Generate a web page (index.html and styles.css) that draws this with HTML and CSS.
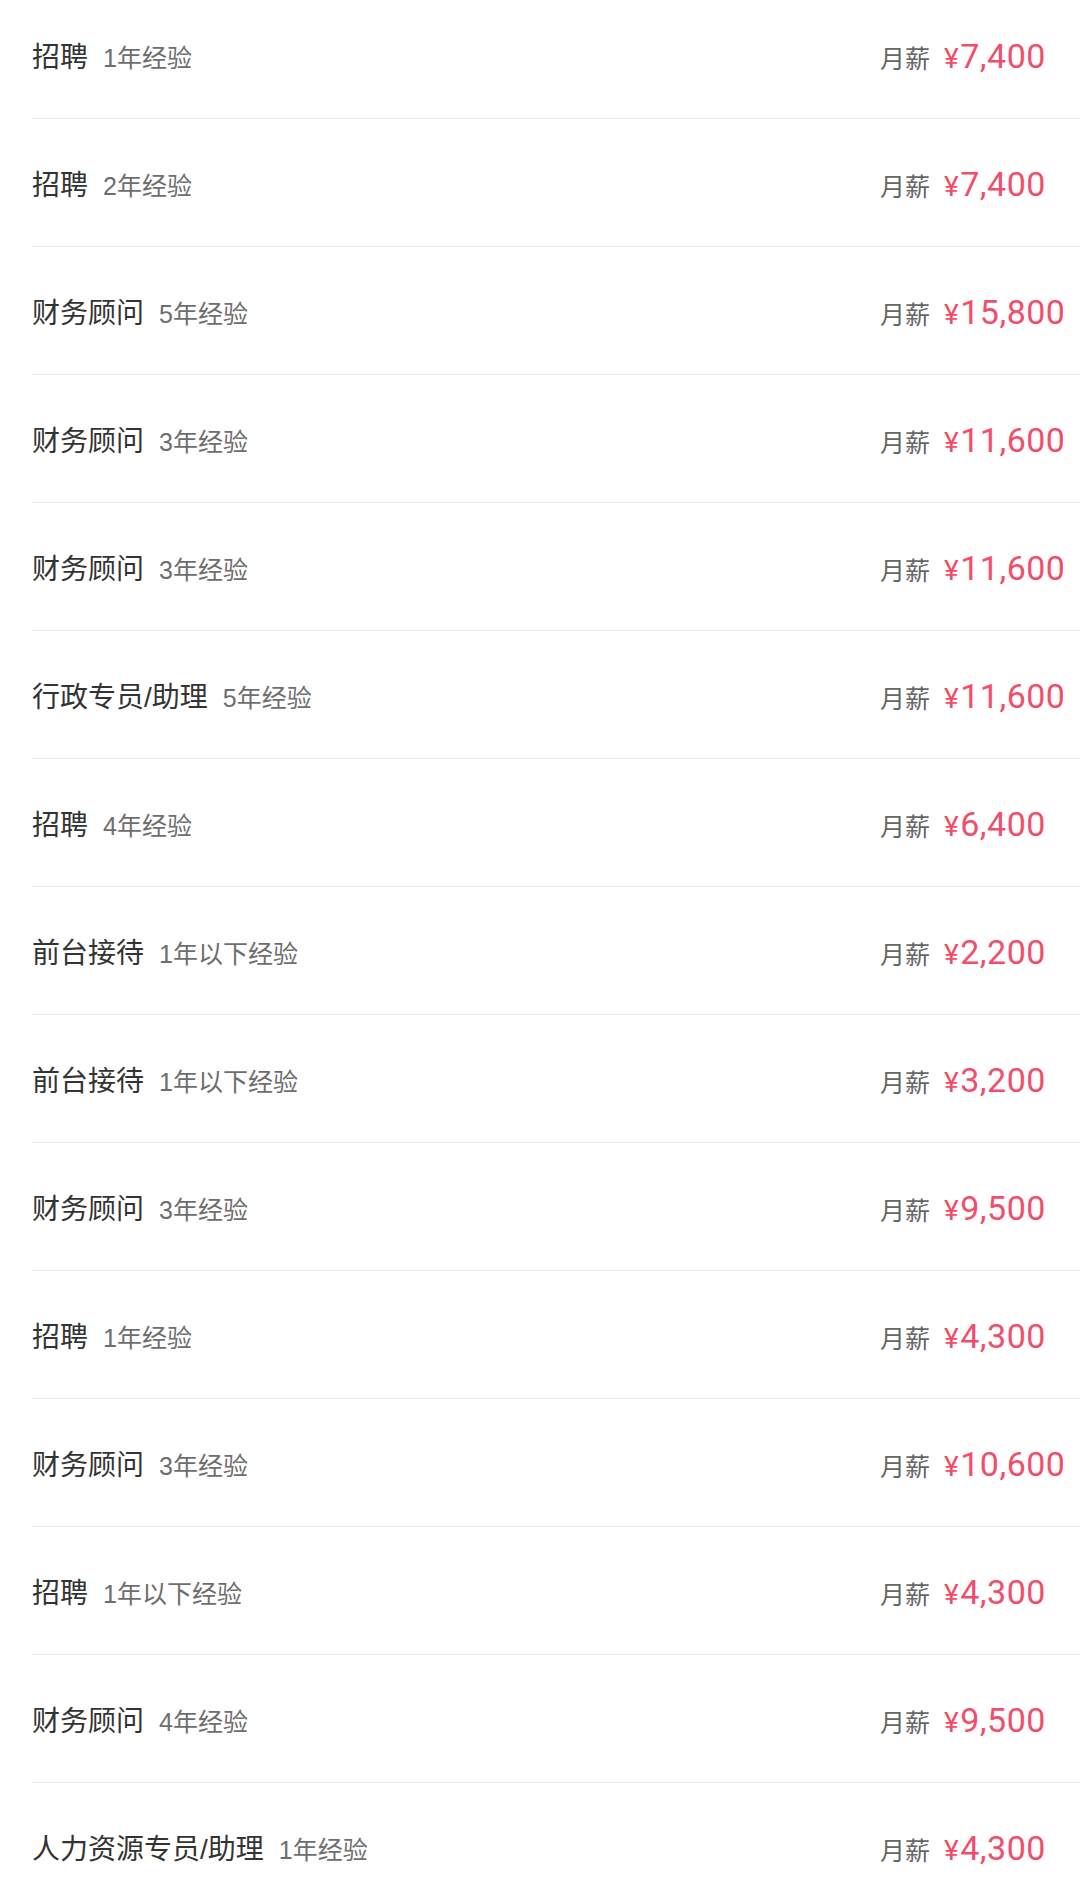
FILE: index.html
```html
<!DOCTYPE html>
<html lang="zh-CN">
<head>
<meta charset="utf-8">
<title>职位列表</title>
<link rel="stylesheet" href="styles.css">
</head>
<body>
<ul class="job-list">
  <li class="job"><div class="job-info"><span class="job-title">招聘</span><span class="job-exp">1年经验</span></div><div class="job-salary"><span class="salary-label">月薪</span><span class="salary-value"><span class="yen">¥</span>7,400</span></div></li>
  <li class="job"><div class="job-info"><span class="job-title">招聘</span><span class="job-exp">2年经验</span></div><div class="job-salary"><span class="salary-label">月薪</span><span class="salary-value"><span class="yen">¥</span>7,400</span></div></li>
  <li class="job"><div class="job-info"><span class="job-title">财务顾问</span><span class="job-exp">5年经验</span></div><div class="job-salary"><span class="salary-label">月薪</span><span class="salary-value"><span class="yen">¥</span>15,800</span></div></li>
  <li class="job"><div class="job-info"><span class="job-title">财务顾问</span><span class="job-exp">3年经验</span></div><div class="job-salary"><span class="salary-label">月薪</span><span class="salary-value"><span class="yen">¥</span>11,600</span></div></li>
  <li class="job"><div class="job-info"><span class="job-title">财务顾问</span><span class="job-exp">3年经验</span></div><div class="job-salary"><span class="salary-label">月薪</span><span class="salary-value"><span class="yen">¥</span>11,600</span></div></li>
  <li class="job"><div class="job-info"><span class="job-title">行政专员/助理</span><span class="job-exp">5年经验</span></div><div class="job-salary"><span class="salary-label">月薪</span><span class="salary-value"><span class="yen">¥</span>11,600</span></div></li>
  <li class="job"><div class="job-info"><span class="job-title">招聘</span><span class="job-exp">4年经验</span></div><div class="job-salary"><span class="salary-label">月薪</span><span class="salary-value"><span class="yen">¥</span>6,400</span></div></li>
  <li class="job"><div class="job-info"><span class="job-title">前台接待</span><span class="job-exp">1年以下经验</span></div><div class="job-salary"><span class="salary-label">月薪</span><span class="salary-value"><span class="yen">¥</span>2,200</span></div></li>
  <li class="job"><div class="job-info"><span class="job-title">前台接待</span><span class="job-exp">1年以下经验</span></div><div class="job-salary"><span class="salary-label">月薪</span><span class="salary-value"><span class="yen">¥</span>3,200</span></div></li>
  <li class="job"><div class="job-info"><span class="job-title">财务顾问</span><span class="job-exp">3年经验</span></div><div class="job-salary"><span class="salary-label">月薪</span><span class="salary-value"><span class="yen">¥</span>9,500</span></div></li>
  <li class="job"><div class="job-info"><span class="job-title">招聘</span><span class="job-exp">1年经验</span></div><div class="job-salary"><span class="salary-label">月薪</span><span class="salary-value"><span class="yen">¥</span>4,300</span></div></li>
  <li class="job"><div class="job-info"><span class="job-title">财务顾问</span><span class="job-exp">3年经验</span></div><div class="job-salary"><span class="salary-label">月薪</span><span class="salary-value"><span class="yen">¥</span>10,600</span></div></li>
  <li class="job"><div class="job-info"><span class="job-title">招聘</span><span class="job-exp">1年以下经验</span></div><div class="job-salary"><span class="salary-label">月薪</span><span class="salary-value"><span class="yen">¥</span>4,300</span></div></li>
  <li class="job"><div class="job-info"><span class="job-title">财务顾问</span><span class="job-exp">4年经验</span></div><div class="job-salary"><span class="salary-label">月薪</span><span class="salary-value"><span class="yen">¥</span>9,500</span></div></li>
  <li class="job"><div class="job-info"><span class="job-title">人力资源专员/助理</span><span class="job-exp">1年经验</span></div><div class="job-salary"><span class="salary-label">月薪</span><span class="salary-value"><span class="yen">¥</span>4,300</span></div></li>
</ul>
</body>
</html>
```

FILE: styles.css
```css
html, body {
  margin: 0;
  padding: 0;
  background: #ffffff;
  overflow: hidden;
}

body {
  font-family: "Noto Sans CJK SC", "Liberation Sans", sans-serif;
}

.job-list {
  list-style: none;
  margin: -9px 0 0 0;
  padding: 0;
}

.job {
  display: flex;
  align-items: center;
  box-sizing: border-box;
  height: 128px;
  margin-left: 32px;
  border-bottom: 1px solid #e8e8e8;
}

.job-info {
  flex: 1;
  display: flex;
  align-items: baseline;
  white-space: nowrap;
}

.job-title {
  font-size: 28px;
  color: #333333;
  font-family: "Liberation Sans", "Noto Sans CJK SC", sans-serif;
}

.job-exp {
  margin-left: 15px;
  font-size: 25px;
  color: #6e6e6e;
  font-family: "Liberation Sans", "Noto Sans CJK SC", sans-serif;
}

.job-salary {
  width: 200px;
  display: flex;
  align-items: baseline;
  white-space: nowrap;
  padding-top: 3px;
}

.salary-label {
  font-size: 25px;
  color: #666666;
}

.salary-value {
  margin-left: 14px;
  font-family: Roboto, "Liberation Sans", sans-serif;
  font-size: 34px;
  color: #f24e6c;
  letter-spacing: 0.5px;
}

.yen {
  font-size: 28px;
  margin-right: 1px;
}
```
